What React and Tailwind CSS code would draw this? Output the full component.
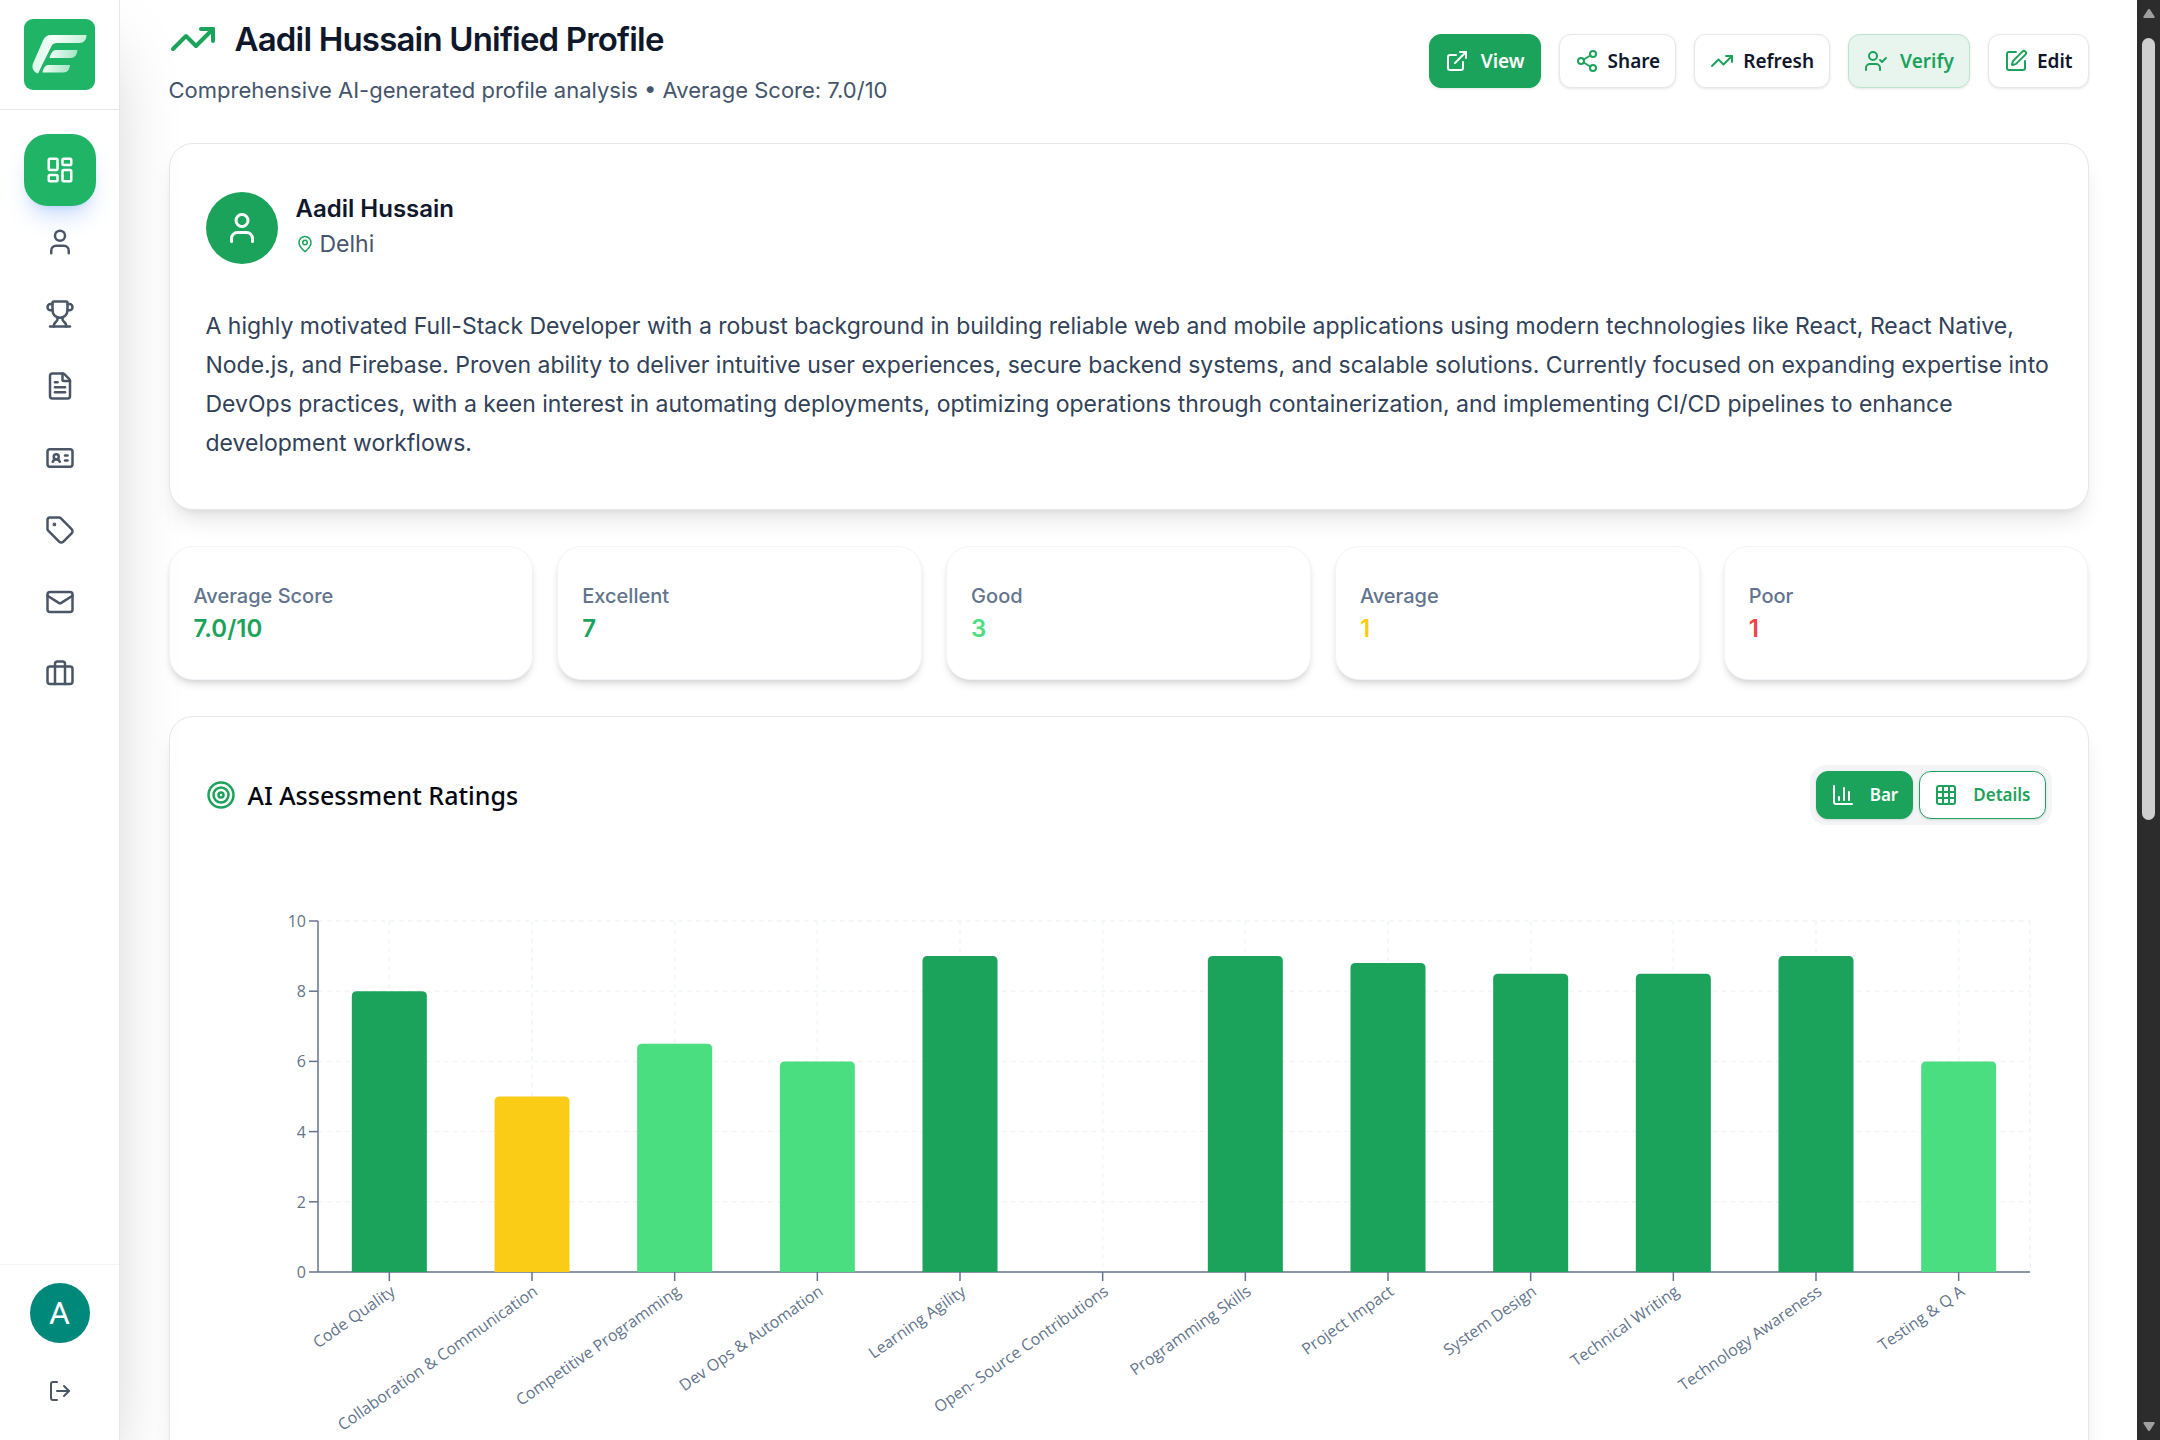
import React, { useState } from 'react';
import {
  LayoutDashboard, User, Trophy, FileText, IdCard, Tag, Mail, Briefcase, LogOut,
  TrendingUp, ExternalLink, Share2, UserCheck, SquarePen, MapPin, Target,
  ChartColumn, Grid3x3,
} from 'lucide-react';

const navItems = [
  { label: 'Dashboard', icon: LayoutDashboard },
  { label: 'Profile', icon: User },
  { label: 'Achievements', icon: Trophy },
  { label: 'Resume', icon: FileText },
  { label: 'ID Card', icon: IdCard },
  { label: 'Tags', icon: Tag },
  { label: 'Messages', icon: Mail },
  { label: 'Jobs', icon: Briefcase },
];

const stats = [
  { label: 'Average Score', value: '7.0/10', color: 'text-[#1ca35b]' },
  { label: 'Excellent', value: '7', color: 'text-[#1ca35b]' },
  { label: 'Good', value: '3', color: 'text-[#4ade80]' },
  { label: 'Average', value: '1', color: 'text-[#facc15]' },
  { label: 'Poor', value: '1', color: 'text-[#ef4444]' },
];

const ratings = [
  { name: 'Code Quality', score: 8 },
  { name: 'Collaboration & Communication', score: 5 },
  { name: 'Competitive Programming', score: 6.5 },
  { name: 'Dev Ops & Automation', score: 6 },
  { name: 'Learning Agility', score: 9 },
  { name: 'Open- Source Contributions', score: 0 },
  { name: 'Programming Skills', score: 9 },
  { name: 'Project Impact', score: 8.8 },
  { name: 'System Design', score: 8.5 },
  { name: 'Technical Writing', score: 8.5 },
  { name: 'Technology Awareness', score: 9 },
  { name: 'Testing & Q A', score: 6 },
];

const getBarColor = (score) => {
  if (score >= 8) return '#1ca35b';
  if (score >= 6) return '#4ade80';
  if (score >= 4) return '#facc15';
  return '#ef4444';
};

function Logo() {
  return (
    <svg viewBox="0 0 72 72" className="size-[72px]" aria-hidden="true">
      <defs>
        <linearGradient id="logoStem" x1="0" y1="0" x2="1" y2="0">
          <stop offset="0" stopColor="#dcf8ea" />
          <stop offset="0.4" stopColor="#f6fffa" />
          <stop offset="1" stopColor="#c4f0d9" />
        </linearGradient>
        <linearGradient id="logoBar" x1="0" y1="0" x2="1" y2="0">
          <stop offset="0" stopColor="#eefcf5" />
          <stop offset="1" stopColor="#a4e6c5" />
        </linearGradient>
      </defs>
      <rect width="71" height="71" rx="9" fill="#20b566" />
      <path d="M27 16H62.5C62.5 20.5 60 24 55 24H33C30 24 28.5 25 27.5 27L14 54.500C10.500 53.500 7 49.500 9 44.500L19 21.500C20.500 18 23 16 27 16Z" fill="url(#logoStem)" />
      <path d="M31 31H53.500C53 36 50.500 39 46.500 39H25.500C26.500 35 28 32 31 31Z" fill="url(#logoBar)" />
      <path d="M24 46H46C45.500 50.500 43.500 53.500 39.500 53.500H18.500C19 49.500 21 46.500 24 46Z" fill="url(#logoBar)" />
    </svg>
  );
}

function Sidebar() {
  const [active, setActive] = useState('Dashboard');

  return (
    <aside className="z-10 flex w-[120px] shrink-0 flex-col border-r border-gray-200 bg-white shadow-[0_38px_75px_-18px_rgba(0,0,0,0.25)]">
      <div className="flex h-[110px] items-start justify-center border-b border-gray-200 pt-[19px]">
        <a href="#home" aria-label="Home"><Logo /></a>
      </div>
      <nav className="flex flex-1 flex-col items-center pt-6">
        {navItems.map(({ label, icon: Icon }) => (
          <button
            key={label}
            aria-label={label}
            onClick={() => setActive(label)}
            className={
              active === label
                ? 'flex size-[72px] items-center justify-center rounded-3xl bg-[#20b566] text-white shadow-[0_15px_22px_-5px_rgba(59,130,246,0.25),0_6px_9px_-6px_rgba(59,130,246,0.25)]'
                : 'flex size-[72px] items-center justify-center rounded-3xl text-gray-600'
            }
          >
            <Icon size={30} />
          </button>
        ))}
      </nav>
      <div className="flex h-44 flex-col items-center border-t border-gray-100 pt-[18px]">
        <div className="flex size-[60px] items-center justify-center rounded-full bg-[#00897b] font-[Roboto,sans-serif] text-[32px] text-white">
          A
        </div>
        <button aria-label="Log out" className="flex h-24 w-[72px] items-center justify-center text-gray-600">
          <LogOut size={24} />
        </button>
      </div>
    </aside>
  );
}

const outlineBtn = 'border-gray-200 bg-white text-slate-900 gap-[9px]';

const actions = [
  { label: 'View', icon: ExternalLink, style: 'border-[#1ca35b] bg-[#1ca35b] text-white gap-3', iconColor: 'text-white' },
  { label: 'Share', icon: Share2, style: outlineBtn, iconColor: 'text-[#1ca35b]' },
  { label: 'Refresh', icon: TrendingUp, style: outlineBtn, iconColor: 'text-[#1ca35b]' },
  { label: 'Verify', icon: UserCheck, style: 'border-[#bbe3cd] bg-[#e8f5ee] text-[#1ca35b] gap-3', iconColor: 'text-[#1ca35b]' },
  { label: 'Edit', icon: SquarePen, style: outlineBtn, iconColor: 'text-[#1ca35b]' },
];

function PageHeader() {
  return (
    <header className="flex items-center justify-between pt-[15px]">
      <div>
        <div className="flex items-center gap-[18px]">
          <TrendingUp size={48} className="text-[#1ca35b]" />
          <h1 className="text-[33px] leading-[48px] font-semibold tracking-tight text-slate-900">
            Aadil Hussain Unified Profile
          </h1>
        </div>
        <p className="mt-[9px] text-[22px] leading-[36px] text-slate-600">
          Comprehensive AI-generated profile analysis • Average Score: 7.0/10
        </p>
      </div>
      <div className="flex gap-[18px] pb-px font-['Noto_Sans',sans-serif]">
        {actions.map(({ label, icon: Icon, style, iconColor }) => (
          <button
            key={label}
            className={`flex h-[54px] items-center rounded-xl border px-[15px] text-[19px] font-semibold shadow-[0_1px_3px_rgba(0,0,0,0.1)] ${style}`}
          >
            <Icon size={24} className={iconColor} />
            {label}
          </button>
        ))}
      </div>
    </header>
  );
}

function ProfileCard() {
  return (
    <section className="mt-[35px] rounded-3xl border border-gray-200 bg-white px-9 pt-12 pb-[46px] shadow-[0_15px_22px_-5px_rgba(0,0,0,0.1),0_6px_9px_-6px_rgba(0,0,0,0.1)]">
      <div className="flex items-start gap-[18px]">
        <div className="flex size-[72px] items-center justify-center rounded-full bg-[#1ca35b] text-white">
          <User size={36} />
        </div>
        <div>
          <h2 className="text-[24px] leading-[34px] font-semibold text-slate-900">Aadil Hussain</h2>
          <p className="flex items-center gap-[6px] text-[23px] leading-[36px] text-slate-600">
            <MapPin size={18} className="text-[#1ca35b]" />
            Delhi
          </p>
        </div>
      </div>
      <p className="mt-[43px] text-[23px] leading-[39px] text-slate-700">
        A highly motivated Full-Stack Developer with a robust background in building reliable web and mobile
        applications using modern technologies like React, React Native, Node.js, and Firebase. Proven ability to
        deliver intuitive user experiences, secure backend systems, and scalable solutions. Currently focused on
        expanding expertise into DevOps practices, with a keen interest in automating deployments, optimizing
        operations through containerization, and implementing CI/CD pipelines to enhance development workflows.
      </p>
    </section>
  );
}

function StatCards() {
  return (
    <div className="mt-9 grid grid-cols-5 gap-6">
      {stats.map((s) => (
        <div
          key={s.label}
          className="rounded-3xl border border-slate-100 bg-white px-6 pt-[34px] pb-[33px] shadow-[0_6px_9px_-2px_rgba(0,0,0,0.12),0_3px_6px_-3px_rgba(0,0,0,0.12)]"
        >
          <p className="text-[20px] leading-[30px] font-medium text-slate-500">{s.label}</p>
          <p className={`text-[24px] leading-[35px] font-semibold ${s.color}`}>{s.value}</p>
        </div>
      ))}
    </div>
  );
}

// plot area inside the 1846 x 560 chart
const plot = { left: 112, right: 1824, top: 36, bottom: 387 };

function RatingsChart() {
  const step = (plot.right - plot.left) / ratings.length;
  const y = (v) => plot.bottom - (v * (plot.bottom - plot.top)) / 10;
  const cx = (i) => plot.left + step * (i + 0.5);
  const ticks = [0, 2, 4, 6, 8, 10];

  return (
    <svg viewBox="0 0 1846 560" className="mt-[60px] block w-full font-['Open_Sans',sans-serif]" role="img" aria-label="AI assessment ratings">
      <g stroke="#f1f5f9" strokeWidth="1.5" strokeDasharray="4.5 4.5">
        {ticks.map((t) => (
          <line key={t} x1={plot.left} x2={plot.right} y1={y(t)} y2={y(t)} />
        ))}
        {ratings.map((r, i) => (
          <line key={r.name} x1={cx(i)} x2={cx(i)} y1={plot.top} y2={plot.bottom} />
        ))}
        <line x1={plot.right} x2={plot.right} y1={plot.top} y2={plot.bottom} />
      </g>
      <g stroke="#64748b" strokeWidth="1.5">
        <line x1={plot.left} x2={plot.left} y1={plot.top} y2={plot.bottom} />
        <line x1={plot.left} x2={plot.right} y1={plot.bottom} y2={plot.bottom} />
        {ticks.map((t) => (
          <line key={t} x1={plot.left - 9} x2={plot.left} y1={y(t)} y2={y(t)} />
        ))}
        {ratings.map((r, i) => (
          <line key={r.name} x1={cx(i)} x2={cx(i)} y1={plot.bottom} y2={plot.bottom + 9} />
        ))}
      </g>
      {ratings.filter((r) => r.score > 0).map((r) => {
        const x = cx(ratings.indexOf(r)) - 37.5;
        const top = y(r.score);
        return (
          <path
            key={r.name}
            d={`M${x} ${plot.bottom}V${top + 5}q0 -5 5 -5h65q5 0 5 5V${plot.bottom}Z`}
            fill={getBarColor(r.score)}
          />
        );
      })}
      <g fill="#64748b" fontSize="16" textAnchor="end">
        {ticks.map((t) => (
          <text key={t} x={plot.left - 12} y={y(t) + 6}>{t}</text>
        ))}
        {ratings.map((r, i) => (
          <text
            key={r.name}
            transform={`translate(${cx(i)} ${plot.bottom + 12}) rotate(-35)`}
            dy="12"
          >
            {r.name}
          </text>
        ))}
      </g>
    </svg>
  );
}

function RatingsCard() {
  const [view, setView] = useState('Bar');
  const views = [
    { name: 'Bar', icon: ChartColumn },
    { name: 'Details', icon: Grid3x3 },
  ];

  return (
    <section className="mt-9 rounded-3xl border border-gray-200 bg-white px-9 py-12 shadow-[0_15px_22px_-5px_rgba(0,0,0,0.1),0_6px_9px_-6px_rgba(0,0,0,0.1)]">
      <div className="flex items-center justify-between font-['Noto_Sans',sans-serif]">
        <h2 className="flex items-center gap-3 text-[25px] leading-[36px] font-medium text-gray-950">
          <Target size={30} className="text-[#1ca35b]" />
          AI Assessment Ratings
        </h2>
        <div className="flex gap-[6px] rounded-2xl bg-gray-100 p-[6px]">
          {views.map(({ name, icon: Icon }) => (
            <button
              key={name}
              onClick={() => setView(name)}
              className={
                view === name
                  ? 'flex h-12 items-center gap-[15px] rounded-xl border border-[#1ca35b] bg-[#1ca35b] px-[14px] text-[17px] font-semibold text-white shadow-sm'
                  : 'flex h-12 items-center gap-[15px] rounded-xl border border-[#1ca35b] bg-white px-[14px] text-[17px] font-semibold text-[#1ca35b] shadow-sm'
              }
            >
              <Icon size={24} />
              {name}
            </button>
          ))}
        </div>
      </div>
      <RatingsChart />
    </section>
  );
}

function ScrollTrack() {
  return (
    <div className="flex w-[23px] shrink-0 flex-col items-center bg-[#2c2c2c] pt-[9px] pb-[9px]" aria-hidden="true">
      <svg viewBox="0 0 12 9" className="h-[9px] w-3" fill="#9f9f9f"><path d="M5 .6a1.200 1.200 0 0 1 2 0L11.500 7.500Q12 9 10.500 9H1.500Q0 9 .5 7.500Z" /></svg>
      <div className="mt-5 h-[55%] w-[13px] rounded-full bg-[#cfcfcf]" />
      <svg viewBox="0 0 12 9" className="mt-auto h-[9px] w-3" fill="#9f9f9f"><path d="M5 8.400a1.200 1.200 0 0 0 2 0L11.500 1.500Q12 0 10.500 0H1.500Q0 0 .5 1.500Z" /></svg>
    </div>
  );
}

export default function App() {
  return (
    <div className="flex h-screen overflow-hidden bg-white font-[Inter,sans-serif]">
      <Sidebar />
      <main className="min-w-0 flex-1 overflow-hidden px-12">
        <div className="mx-auto max-w-[1920px]">
          <PageHeader />
          <ProfileCard />
          <StatCards />
          <RatingsCard />
        </div>
      </main>
      <ScrollTrack />
    </div>
  );
}
